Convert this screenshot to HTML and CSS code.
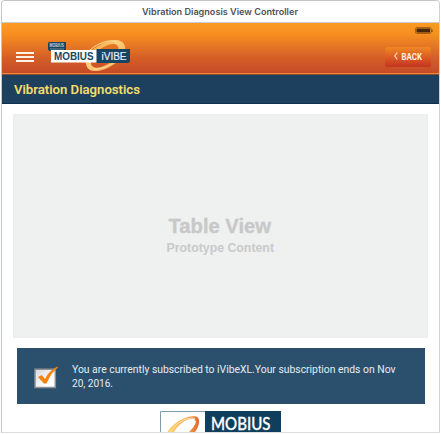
FILE: index.html
```html
<!DOCTYPE html>
<html lang="en">
<head>
<meta charset="utf-8">
<title>Vibration Diagnosis View Controller</title>
<link rel="stylesheet" href="styles.css">
</head>
<body>
<div class="window">
  <div class="titlebar"><svg width="157" height="20"><text x="0" y="14" textLength="156" lengthAdjust="spacingAndGlyphs">Vibration Diagnosis View Controller</text></svg></div>
  <header class="header">
    <div class="menu"><i></i><i></i><i></i></div>
    <svg class="logo" width="84" height="36" viewBox="47 38 84 36">
      <defs>
        <linearGradient id="ring" x1="0" y1="0" x2="1" y2="1">
          <stop offset="0" stop-color="#f58a25"/><stop offset=".45" stop-color="#ffcf7d"/><stop offset="1" stop-color="#ef8b3c"/>
        </linearGradient>
      </defs>
      <path fill="url(#ring)" fill-rule="evenodd" d="M86 65C82 55 104 40 117 41C130 43 126 58 116 64C104 73 88 76 86 65ZM91 65C93 72 105 68 112 62C120 54 121 45 113 45C104 45 90 56 91 65Z"/>
      <path fill="none" stroke="#ffdf9a" stroke-width="1" d="M90 51C98 44 109 40 117 42.500M94 70C102 71 111 66 117 61"/>
      <path fill="#184561" d="M49 43h17v9H51q-3 0-3-2v-5q0-2 1-2z"/>
      <text x="49.500" y="48" class="tiny" textLength="14.500" lengthAdjust="spacingAndGlyphs">MOBIUS</text>
      <path stroke="#91a6ad" stroke-width=".7" d="M50 50h14"/>
      <path fill="#fff" d="M51 51h46v12.500H51z"/>
      <path fill="#184561" d="M96.500 50H130v12q0 2-2 2H96.500z"/>
      <text x="54" y="61" class="brand" textLength="39.500" lengthAdjust="spacingAndGlyphs">MOBIUS</text>
      <text x="101.500" y="61" class="product" textLength="25" lengthAdjust="spacingAndGlyphs">iVIBE</text>
    </svg>
    <div class="tools">
      <svg class="battery" width="18" height="8"><rect x=".5" y=".5" width="15.500" height="6" rx="1.200" fill="none" stroke="#a8600f"/><rect x="1.500" y="1.500" width="13.500" height="4" fill="#47280b"/><path d="M17 2.500v2.500" stroke="#70400d"/></svg>
      <div class="back"><svg width="38" height="18"><path d="M3.300 5.500L.8 9l2.500 3.500" fill="none" stroke="#ffe5cf" stroke-width="1.100"/><text x="7.500" y="12.500" textLength="20.500" lengthAdjust="spacingAndGlyphs">BACK</text></svg></div>
    </div>
  </header>
  <h1 class="heading"><svg width="140" height="28"><text x="0" y="18" textLength="126" lengthAdjust="spacingAndGlyphs">Vibration Diagnostics</text></svg></h1>
  <main class="content">
    <section class="table">
      <svg width="120" height="50"><text class="big" x="8.500" y="24" textLength="102.500" lengthAdjust="spacingAndGlyphs">Table View</text><text class="small" x="6.500" y="42.500" textLength="107.500" lengthAdjust="spacingAndGlyphs">Prototype Content</text></svg>
    </section>
    <section class="notice">
      <svg class="check" width="25" height="25" viewBox="34 365 25 25">
        <defs><linearGradient id="box" x1="0" y1="0" x2="1" y2="1"><stop offset="0" stop-color="#d5d7dc"/><stop offset=".7" stop-color="#fff"/></linearGradient></defs>
        <path fill="url(#box)" stroke="#8d8f92" stroke-width="1.500" d="M35 369.300h20.300v18.200H35z"/>
        <path fill="#f5820c" d="M38 377l3.800-2 3.200 4c3-6 7-10 12.500-12.500l.5 1C52 372 49.500 377 46.500 383.500h-2.500z"/>
      </svg>
      <svg class="message" width="335" height="36"><text x="0" y="14" textLength="323.500" lengthAdjust="spacingAndGlyphs">You are currently subscribed to iVibeXL.Your subscription ends on Nov</text><text x="0" y="27.500" textLength="41" lengthAdjust="spacingAndGlyphs">20, 2016.</text></svg>
    </section>
    <svg class="footer-logo" width="121" height="21" viewBox="160 411 121 21">
      <defs><linearGradient id="arc"><stop offset="0" stop-color="#ffd16f"/><stop offset=".55" stop-color="#f8b154"/><stop offset="1" stop-color="#df662a"/></linearGradient></defs>
      <path fill="#fff" stroke="#7d9cae" d="M160.500 411.500h45V440h-45z"/>
      <path fill="url(#arc)" d="M167.500 432C172 423 188 414.500 196 416.500C201 418 199.500 426 195 432H189C195 426 198 421 194 419C189 417 178 424 174 432Z"/>
      <path fill="none" stroke="#fff0cd" stroke-width=".8" d="M170.500 432C175 424 187 416 195 418.500"/>
      <path fill="#103f5d" d="M205 411h76v21h-76z"/>
      <text x="211" y="429.500" textLength="59.500" lengthAdjust="spacingAndGlyphs">MOBIUS</text>
    </svg>
  </main>
</div>
</body>
</html>
```
FILE: styles.css
```css
* { box-sizing: border-box; }
body { margin: 0; height: 434px; overflow: hidden; background: #fff; font-family: Roboto, sans-serif; }
svg { display: block; flex: none; }
.window { width: 439px; height: 433px; margin-left: 1px; overflow: hidden; border: 1px solid #c6c6c6; border-right-color: #d0d0d0; border-bottom-color: #dedede; border-radius: 4px 4px 0 0; }
.titlebar { height: 22px; padding-left: 140px; background: #fff; border-bottom: 1px solid #c9ccd0; }
.titlebar text { font: 600 9px Inter, sans-serif; fill: #505050; }
.header { height: 51px; display: flex; justify-content: space-between; background: linear-gradient(#fb9a23, #f78f21 22%, #d55e28 70%, #c54b27); border-bottom: 1px solid #f18a36; }
.menu { display: grid; gap: 2px; align-content: start; width: 18px; margin: 29px 0 0 14px; }
.menu i { height: 2px; background: #fff2e6; }
.logo { margin: 14px auto 0 13px; }
.tiny { font: 700 4.5px "Liberation Sans", sans-serif; fill: #c4d2d8; }
.brand { font: 700 10.5px "Liberation Sans", sans-serif; fill: #174762; }
.product { font: 400 10.5px "Liberation Sans", sans-serif; fill: #e1eef3; stroke: #e1eef3; stroke-width: .2px; }
.tools { display: flex; flex-direction: column; align-items: flex-end; margin-right: 6px; }
.battery { margin-top: 4px; }
.back { width: 46px; height: 20px; margin: 12px 2px 0 0; padding-left: 8.5px; background: linear-gradient(#ed8922, #dc5d24 50%, #c3351f); border-radius: 2px; }
.back text { font: 700 9.5px Roboto, sans-serif; fill: #fff0e2; }
.heading { height: 30px; margin: 0; padding: 1px 0 0 12px; background: #1c405e; border-top: 1px solid #824b32; border-bottom: 1px solid #0d304e; }
.heading text { font: 500 13.5px Roboto, sans-serif; fill: #f6df6b; stroke: #f6df6b; stroke-width: .15px; }
.content { display: flex; flex-direction: column; height: 329px; padding: 10px 10px 0 11px; background: #fff; }
.table { display: flex; justify-content: center; flex: none; width: 415px; height: 224px; padding-top: 94px; background: #eff0f0; border: 1px solid #eceded; }
.table svg { margin-right: 1px; }
.table .big { font: 700 20px "Liberation Sans", sans-serif; fill: #c7c8c8; stroke: #c7c8c8; stroke-width: .3px; }
.table .small { font: 700 12px "Liberation Sans", sans-serif; fill: #c9caca; }
.notice { display: flex; flex: none; width: 408px; height: 56px; margin: 10px 0 0 4px; background: #2b506e; }
.check { margin: 17px 0 0 17px; }
.message { margin: 11px 0 0 13px; }
.message text { font: 400 10.5px Roboto, sans-serif; fill: #e5edf4; }
.footer-logo { margin: 7px 0 0 147px; }
.footer-logo text { font: 500 16.5px Lato, sans-serif; fill: #fff; stroke: #fff; stroke-width: .3px; }
```
